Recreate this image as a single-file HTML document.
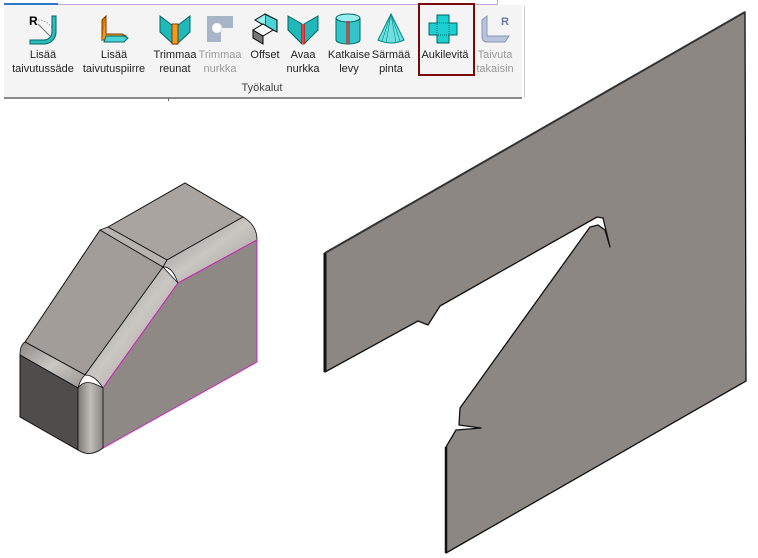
<!DOCTYPE html>
<html><head><meta charset="utf-8"><style>
body{margin:0;width:758px;height:558px;background:#fff;position:relative;overflow:hidden;font-family:"Segoe UI","Liberation Sans",sans-serif}
.tb{position:absolute;left:4px;top:5px;width:518px;height:92px;background:#f4f4f4;border-bottom:2px solid #8a8a8a}
.lbl{position:absolute;top:48px;font-size:11px;line-height:14px;color:#222;text-align:center;white-space:nowrap;transform:translateX(-50%)}
.dis{color:#9a9a9a}
svg.ic{position:absolute;top:12px;width:34px;height:34px}
</style></head><body>
<div style="position:absolute;left:4px;top:3px;width:54px;height:2px;background:#2b78c5"></div>
<div style="position:absolute;left:58px;top:4px;width:440px;height:1px;background:#c8a0e0"></div>
<div style="position:absolute;left:497px;top:0;width:1px;height:5px;background:#c8a0e0"></div>
<div class="tb"></div>
<div style="position:absolute;left:524px;top:6px;width:1px;height:92px;background:#ccc"></div>
<div style="position:absolute;left:168px;top:98px;width:1px;height:3px;background:#666"></div>

<!-- icons -->
<svg class="ic" style="left:26px" viewBox="0 0 34 34"><text x="3" y="13" font-size="12" font-weight="bold" font-family="Liberation Sans">R</text><path d="M12 8 A16 16 0 0 1 28 24" fill="none" stroke="#aaa" stroke-dasharray="1.5 1.5"/><path d="M12 12 L24 24" stroke="#777"/><path d="M30 4 V20 A12 12 0 0 1 18 32 H4 V28 H18 A8 8 0 0 0 26 20 V4Z" fill="#2bbcbc" stroke="#066"/></svg>
<svg class="ic" style="left:96px" viewBox="0 0 34 34"><path d="M6 8 L10 4 V24 L6 28Z" fill="#e07b00" stroke="#7a3a00"/><path d="M10 4 V22 L26 22 L30 24 L10 28 L6 28" fill="#f59a1c" stroke="#7a3a00"/><path d="M10 24 L28 24 L32 26 L28 30 L8 30Z" fill="#4cd3d6" stroke="#066"/></svg>
<svg class="ic" style="left:158px" viewBox="0 0 34 34"><path d="M2 4 L15 14 V32 L2 20Z" fill="#20b8b8" stroke="#066"/><path d="M32 4 L19 14 V32 L32 20Z" fill="#20b8b8" stroke="#066"/><rect x="14" y="12" width="6" height="20" fill="#f59a1c" stroke="#7a3a00"/></svg>
<svg class="ic" style="left:203px" viewBox="0 0 34 34"><path d="M4 4 H30 V16 H18 V30 H4Z" fill="#a8b4c8"/><circle cx="14" cy="16" r="5" fill="#fff" stroke="#ccc" stroke-dasharray="1 1"/></svg>
<svg class="ic" style="left:249px" viewBox="0 0 34 34"><path d="M16 2 L28 8 L28 20 L16 14Z" fill="#4cd3d6" stroke="#000"/><path d="M16 2 L6 8 L16 14" fill="#9ee" stroke="#000"/><path d="M4 18 L14 24 V32 L4 26Z" fill="#777" stroke="#000"/><path d="M4 18 L14 12 L24 18 L14 24Z" fill="#fff" stroke="#000"/></svg>
<svg class="ic" style="left:286px" viewBox="0 0 34 34"><path d="M2 4 L16 12 V32 L2 18Z" fill="#20b8b8" stroke="#066"/><path d="M32 4 L18 12 V32 L32 18Z" fill="#20b8b8" stroke="#066"/><path d="M16 12 V32 M18 12 V32" stroke="#e00" stroke-width="1.5"/></svg>
<svg class="ic" style="left:331px" viewBox="0 0 34 34"><ellipse cx="17" cy="6" rx="12" ry="4" fill="#9ee" stroke="#066"/><path d="M5 6 V28 A12 4 0 0 0 29 28 V6 A12 4 0 0 1 5 6" fill="#30c6c8" stroke="#066"/><path d="M16 9 V32 M18 9 V32" stroke="#e00"/></svg>
<svg class="ic" style="left:374px" viewBox="0 0 34 34"><path d="M17 2 L4 28 Q17 34 30 28Z" fill="#6fe0e0" stroke="#088"/><path d="M17 2 L12 31 M17 2 L22 31 M17 2 L8 29 M17 2 L26 29" stroke="#088" stroke-width=".6"/></svg>
<svg class="ic" style="left:426px" viewBox="0 0 34 34"><path d="M11 3 H23 V11 H31 V23 H23 V31 H11 V23 H3 V11 H11Z" fill="#1ccfd0" stroke="#066"/><rect x="11" y="11" width="12" height="12" fill="none" stroke="#066" stroke-dasharray="1 1"/></svg>
<svg class="ic" style="left:479px" viewBox="0 0 34 34"><text x="22" y="13" font-size="11" font-weight="bold" fill="#6a7aa8" font-family="Liberation Sans">R</text><path d="M3 8 L8 4 V24 L30 24 L26 30 H8 Q3 30 3 24Z" fill="#b8c4dc" stroke="#8896b4"/></svg>

<div class="lbl" style="left:43px">Lisää<br>taivutussäde</div>
<div class="lbl" style="left:114px">Lisää<br>taivutuspiirre</div>
<div class="lbl" style="left:175px">Trimmaa<br>reunat</div>
<div class="lbl dis" style="left:220px">Trimmaa<br>nurkka</div>
<div class="lbl" style="left:265px">Offset</div>
<div class="lbl" style="left:303px">Avaa<br>nurkka</div>
<div class="lbl" style="left:349px">Katkaise<br>levy</div>
<div class="lbl" style="left:391px">Särmää<br>pinta</div>
<div class="lbl" style="left:445px">Aukilevitä</div>
<div class="lbl dis" style="left:495px">Taivuta<br>takaisin</div>
<div class="lbl" style="left:262px;top:81px;color:#444">Työkalut</div>
<div style="position:absolute;left:418px;top:3px;width:53px;height:69px;border:2px solid #7a0a0a"></div>

<svg style="position:absolute;left:0;top:0" width="758" height="558" viewBox="0 0 758 558">
<!-- plate -->
<path d="M325,253 L745,12 L746,381 L446,553 L446,447 L456,430 L481,428 L459,425 L460,408 L590,227 L598,225 L605,230 L610,247 L603,218 L597,217 L440,306 L428,325 L418,321 L325,372 Z" fill="#8d8784" stroke="#111" stroke-width="1.3" stroke-linejoin="round"/>
<path d="M325,253 V372" stroke="#111" stroke-width="3"/>
<path d="M325,253 L745,12" stroke="#333" stroke-width="2"/>
<path d="M446,447 V553" stroke="#111" stroke-width="2.5"/>
<!-- block -->
<defs>
<linearGradient id="g1" x1="0" y1="0" x2="1" y2="1"><stop offset="0" stop-color="#8c8885"/><stop offset=".5" stop-color="#cac6c2"/><stop offset="1" stop-color="#9a9590"/></linearGradient>
<linearGradient id="g2" x1="0" y1="0" x2="1" y2="0"><stop offset="0" stop-color="#7b7773"/><stop offset=".5" stop-color="#c0bcb8"/><stop offset="1" stop-color="#8a8581"/></linearGradient>
</defs>
<path d="M108,227 L185,183 L243,217 L167,260Z" fill="#a9a49f" stroke="#111"/>
<path d="M25,342 L100,230 L163,267 L85,375Z" fill="#a29d98" stroke="#111"/>
<path d="M100,230 L108,227 L167,260 L163,267Z" fill="#b8b3ae" stroke="#111" stroke-width=".8"/>
<path d="M167,260 L243,217 Q257,225 257,240 L178,283 Q172,266 163,267Z" fill="url(#g1)" stroke="#111" stroke-width=".8"/>
<path d="M163,267 L178,283 L103,388 Q95,375 85,375Z" fill="url(#g1)" stroke="#111" stroke-width=".8"/>
<path d="M25,342 L85,375 Q80,380 78,388 L20,355 Q20,345 25,342Z" fill="url(#g1)" stroke="#111" stroke-width=".8"/>
<path d="M257,240 V362 L103,448 V388 L178,283Z" fill="#8e8985" stroke="#d020c0" stroke-width="1"/>
<path d="M20,355 L78,388 V450 L20,417Z" fill="#4f4d4b" stroke="#111"/>
<path d="M78,388 Q85,377 103,388 V448 Q90,458 78,450Z" fill="url(#g2)" stroke="#111" stroke-width=".8"/>
</svg>
</body></html>
